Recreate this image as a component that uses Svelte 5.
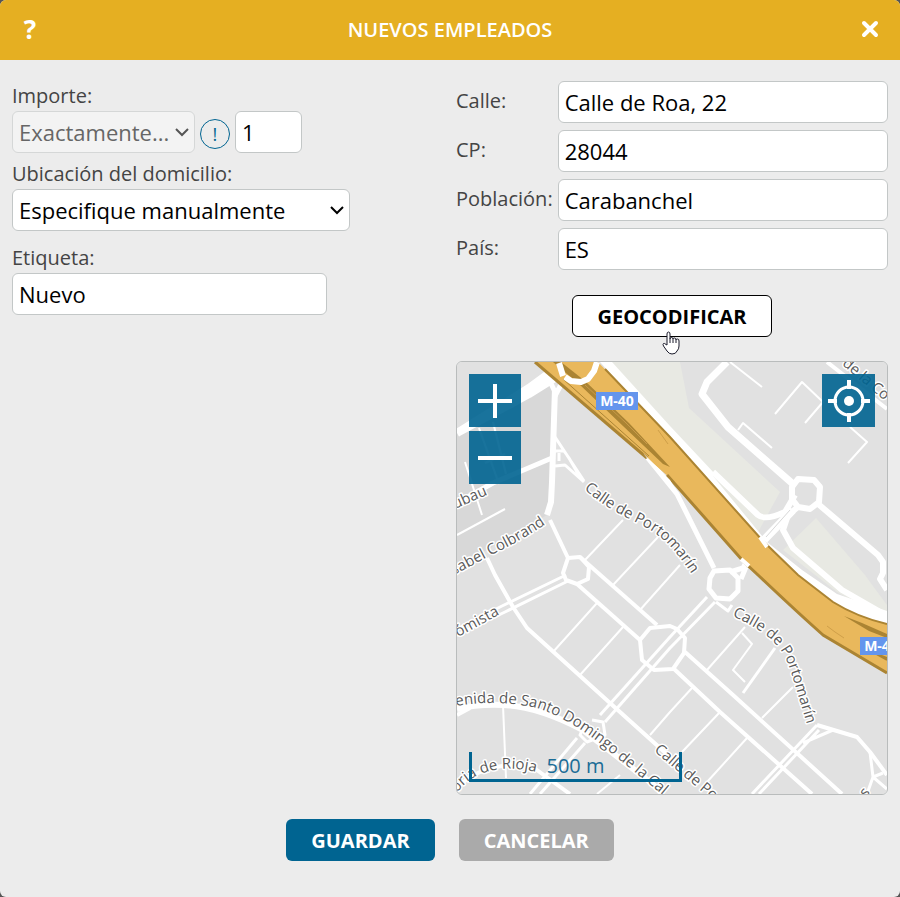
<script>
  let amountMode = 'exact'
  let amount = 1
  let location = 'manual'
  let label = 'Nuevo'

  let address = [
    { id: 'street', name: 'Calle', value: 'Calle de Roa, 22' },
    { id: 'zip', name: 'CP', value: '28044' },
    { id: 'city', name: 'Población', value: 'Carabanchel' },
    { id: 'country', name: 'País', value: 'ES' },
  ]

  // Streets grouped by stroke width, widest last
  const streets = [
    {
      width: 2,
      paths: [
        'M0 173L48 147M8 100L25 153M22 66L42 122M36 60L49 112M28 101L48 92',
        'M166 158L128 198M201 175L156 223M223 203L183 248',
        'M140 241L96 290M166 265L123 313M46 343L49 416',
        'M213 350L193 373M163 413L140 432M235 326L213 350',
        'M288 265L250 308M285 271L295 282L276 308L288 320',
        'M336 325L305 356M263 350L225 390M290 376L250 420',
        'M273 0L305 25M318 52L345 20L366 40L348 61',
        'M393 65L410 80L391 101M281 68L286 61L315 86',
      ],
    },
    {
      width: 3,
      paths: [
        'M109 213L45 244L0 267M111 219L48 250L0 273',
        'M213 275L143 353M213 286L148 360M250 235L213 275M258 240L213 286',
        'M120 376L73 432M128 381L83 432',
        'M360 363L295 432M362 368L302 432M376 368L346 381',
        'M98 89L107 89L112 96L124 117M98 104L108 103L127 120M98 75L127 119M102 91V99',
        'M135 358L146 360L148 373L130 380L123 373L126 366',
        'M413 390L416 415L410 432M416 415L426 411M416 415L430 427',
        'M259 240L271 249L275 243',
        'M318 286L286 331',
      ],
    },
    {
      width: 4,
      paths: [
        'M93 158L111 196M30 196L38 213L56 245L70 266L153 341L213 395',
        'M111 196L123 195L132 205L131 217L120 222L109 218L106 211Z',
        'M123 195L200 263M120 222L183 278',
        'M193 266L183 278L185 298L197 308L216 307L227 291L228 276L220 267L213 264Z',
        'M228 290L276 333L385 432M216 306L263 350L355 432',
        'M360 363L400 375L413 390L430 413',
        'M0 426Q25 400 73 403L113 432M370 0L430 47',
        'M0 353L13 346',
      ],
    },
    {
      width: 5,
      paths: [
        'M95 96L36 121L0 141M90 13L98 30M108 15L98 34',
        'M190 95L220 132L257 206',
        'M257 209L273 208L281 216L281 229L273 237L259 236L252 227L253 216Z',
        'M273 210L286 206L291 197M284 217L289 205',
      ],
    },
    {
      width: 6,
      paths: [
        'M98 26L95 120L94 140L90 153',
        'M256 110L301 153Q308 159 328 150L338 133',
        'M341 145L331 153L326 168L336 186L385 228L430 254',
        'M341 117L357 118L363 125L362 140L353 147L341 145L335 137L335 125Z',
        'M360 141L421 193L426 200L426 211L423 217L430 228',
        'M0 347Q20 342 46 343Q80 344 126 368L193 420L206 432',
      ],
    },
    {
      width: 7,
      paths: ['M270 0L250 20L245 32L271 65L336 122'],
    },
    {
      width: 8,
      paths: ['M0 71L72 32L104 12M0 71L72 26L102 4M336 148L305 180'],
    },
  ]

  const streetNames = [
    { d: 'M127 127C150 147 165 153 190 166C210 178 222 192 244 226', text: 'Calle de Portomarín' },
    { d: 'M275 254C300 265 320 278 329 297C337 316 342 338 353 372', text: 'Calle de Portomarín' },
    { d: 'M-3 213L40 190Q70 176 100 154', text: 'sabel Colbrand' },
    { d: 'M1 275L60 243', text: 'ómista' },
    { d: 'M-2 147L50 124', text: 'ubau' },
    { d: 'M-1 344Q40 337 80 346Q108 355 141 380L225 449', text: 'enida de Santo Domingo de la Cal' },
    { d: 'M0 431Q15 410 45 407Q65 405 92 414', text: 'oria de Rioja' },
    { d: 'M197 389Q225 413 300 476', text: 'Calle de Portomarín' },
    { d: 'M377 -4L455 62', text: 'r de la Co' },
    { d: 'M409 436L430 410', text: 's' },
  ]
</script>

<div class="dialog">
  <header>
    <button class="icon-button" aria-label="Ayuda">?</button>
    <h1>NUEVOS EMPLEADOS</h1>
    <button class="icon-button" aria-label="Cerrar">
      <svg width="18" height="18" viewBox="0 0 18 18">
        <path d="M3 3L15 15M15 3L3 15" stroke="#fff" stroke-width="4" stroke-linecap="round" />
      </svg>
    </button>
  </header>

  <main>
    <section class="column">
      <div class="group">
        <label for="amount-mode">Importe:</label>
        <div class="row">
          <div class="select short">
            <select id="amount-mode" bind:value={amountMode} disabled>
              <option value="exact">Exactamente...</option>
            </select>
            <svg width="14" height="10" viewBox="0 0 14 10">
              <path d="M1 2L7 8L13 2" />
            </svg>
          </div>
          <button class="info" aria-label="Información">!</button>
          <input class="amount" type="text" aria-label="Cantidad" bind:value={amount} />
        </div>
      </div>

      <div class="group">
        <label for="location">Ubicación del domicilio:</label>
        <div class="select wide">
          <select id="location" bind:value={location}>
            <option value="manual">Especifique manualmente</option>
          </select>
          <svg width="14" height="10" viewBox="0 0 14 10">
            <path d="M1 2L7 8L13 2" />
          </svg>
        </div>
      </div>

      <div class="group spaced">
        <label for="label">Etiqueta:</label>
        <input id="label" class="tag" type="text" bind:value={label} />
      </div>
    </section>

    <section class="column">
      <div class="address">
        {#each address as field}
          <label for={field.id}>{field.name}:</label>
          <input id={field.id} type="text" bind:value={field.value} />
        {/each}
      </div>

      <div class="geocode">
        <button class="button outline">GEOCODIFICAR</button>
        <svg class="pointer" width="18" height="24" viewBox="0 0 18 24">
          <path
            d="M5 14V3Q5 1 6.500 1T8 3V8Q8 6.500 9.500 6.500T11 8Q11 7 12.500 7T14 9Q14 8 15.500 8T17 10V15Q17 18 15 20Q14 23 10 23Q7 23 5 20L1.500 15Q.5 13 1.500 12.500Q2.500 12 4 13.500Z"
            fill="#fff"
            stroke="#1b1b2b"
          />
          <path d="M8 8V12M11 8V12M14 9V12" stroke="#1b1b2b" />
        </svg>
      </div>

      <div class="map">
        <svg class="tiles" viewBox="0 0 430 432" preserveAspectRatio="xMidYMid slice">
          <rect width="430" height="432" fill="#e1e1e1" />
          <path d="M0 71L97 20L93 140L90 153L0 205Z" fill="#d8d8d8" />
          <path d="M150 0H223L232 46L323 130L300 172L213 76Z" fill="#e8e9e3" />
          <path d="M359 156L408 213L413 220L430 243V258L380 230L326 188Z" fill="#e8e9e3" />

          {#each streets as group}
            {#each group.paths as d}
              <path class="street" {d} stroke-width={group.width} />
            {/each}
          {/each}
          <path d="M333 148L309 175" stroke="#d8d8d8" />

          <!-- slip road running beside the motorway -->
          <path
            d="M143 0H155L213 64L258 112L256 114L310 180L345 208L380 232L430 249V266L376 243L340 216L303 181L213 77Z"
            fill="#fff"
          />
          <path
            d="M78 0H141L213 75L305 178L341 213L376 240Q400 255 430 262V311L366 273Q340 250 301 213L286 198L213 116L190 96Z"
            fill="#e9b85c"
          />
          <g fill="none" stroke="#ab8433" stroke-width="2">
            <path d="M148 7L213 75L305 178L341 213L376 240Q400 255 430 262" />
            <path d="M78 0L190 96" stroke-width="3" />
            <path d="M106 17L192 94" stroke-width="1" />
            <path d="M210 113L286 199L301 213Q340 250 366 273L430 311" stroke-width="3" />
            <path d="M430 296L407 287M430 298L412 288" />
          </g>
          <path d="M96 0H104L128 19L172 61L213 105L206 102L166 64L122 22Z" fill="#ab8433" />
          <path d="M128 23L168 60L190 82" stroke="#c89a48" fill="none" />
          <path d="M186 91L213 118L222 133L212 124Z" fill="#fff" />
          <path d="M387 254L405 261L430 272V276L412 269Z" fill="#ab8433" />
          <path d="M370 264L378 270L387 276M201 68L211 82" stroke="#cf9f49" fill="none" />
          <path class="street" d="M102 1L106 14M108 15L114 19L124 20L131 17L137 9L140 0" stroke-width="6" />
          <path class="street" d="M303 175L310 185M284 197L292 204" stroke-width="4" />

          {#each streetNames as name, i}
            <path id="street-{i}" d={name.d} fill="none" />
            <text class="street-name">
              <textPath href="#street-{i}">{name.text}</textPath>
            </text>
          {/each}

          <rect x="139" y="30" width="42" height="18" fill="#6495ed" />
          <text class="road" x="160" y="44">M-40</text>
          <rect x="403" y="275" width="42" height="18" fill="#6495ed" />
          <text class="road" x="424" y="289">M-40</text>
        </svg>

        <div class="zoom">
          <button aria-label="Acercar">
            <svg width="36" height="36" viewBox="0 0 36 36">
              <path d="M1 18H35M18 1V35" stroke="#fff" stroke-width="4" />
            </svg>
          </button>
          <button aria-label="Alejar">
            <svg width="36" height="36" viewBox="0 0 36 36">
              <path d="M1 18H35" stroke="#fff" stroke-width="4" />
            </svg>
          </button>
        </div>
        <button class="locate" aria-label="Mi ubicación">
          <svg width="42" height="42" viewBox="0 0 42 42" fill="none" stroke="#fff">
            <circle cx="21" cy="21" r="14" stroke-width="3" />
            <circle cx="21" cy="21" r="5" fill="#fff" stroke="none" />
            <path d="M21 0V9M21 33V42M0 21H9M33 21H42" stroke-width="4" />
          </svg>
        </button>
        <div class="scale">500 m</div>
      </div>
    </section>
  </main>

  <footer>
    <button class="button primary">GUARDAR</button>
    <button class="button muted">CANCELAR</button>
  </footer>
</div>

<style>
  :global(body) {
    background: #555;
  }
  .dialog {
    display: flex;
    flex-direction: column;
    min-height: 100vh;
    overflow: hidden;
    border-radius: 6px;
    background: #ececec;
    color: #444;
    font-family: 'Open Sans', sans-serif;
    font-size: 20px;
  }
  .dialog * {
    box-sizing: border-box;
  }
  header {
    display: flex;
    align-items: center;
    justify-content: space-between;
    height: 60px;
    padding: 0 12px 2px;
    background: #e5af22;
    color: #fff;
  }
  h1 {
    margin: 0;
    font-size: 20px;
    font-weight: 600;
  }
  button {
    font-family: inherit;
    cursor: pointer;
  }
  .icon-button {
    display: flex;
    align-items: center;
    justify-content: center;
    width: 36px;
    height: 36px;
    padding: 0;
    border: 0;
    background: none;
    color: #fff;
    font-size: 26px;
    font-weight: 700;
  }
  main {
    display: grid;
    grid-template-columns: 1fr 1fr;
    gap: 12px;
    padding: 21px 12px 24px;
  }
  .column {
    min-width: 0;
  }
  .group {
    margin-bottom: 6px;
  }
  .group.spaced {
    margin-top: 12px;
  }
  .group label {
    display: block;
    line-height: 30px;
  }
  .row {
    display: flex;
    align-items: center;
    gap: 5px;
  }
  input,
  select {
    display: block;
    width: 100%;
    height: 42px;
    margin: 0;
    padding: 0 6px;
    border: 1px solid #c3c7c7;
    border-radius: 6px;
    background: #fff;
    color: #000;
    font-family: inherit;
    font-size: 22px;
  }
  select {
    appearance: none;
  }
  select:disabled {
    border-color: #d5d7d7;
    background: #f3f3f3;
    color: #666;
    opacity: 1;
  }
  .select {
    position: relative;
  }
  .select svg {
    position: absolute;
    top: 16px;
    right: 6px;
    fill: none;
    stroke: #000;
    stroke-width: 2;
    pointer-events: none;
  }
  .short svg {
    stroke: #555;
  }
  .short {
    width: 183px;
  }
  .wide {
    width: 338px;
    max-width: 100%;
  }
  .tag {
    width: 315px;
    max-width: 100%;
  }
  .amount {
    width: 67px;
  }
  .info {
    width: 30px;
    height: 30px;
    margin-top: 4px;
    padding: 0;
    border: 1px solid #006491;
    border-radius: 50%;
    background: none;
    color: #006491;
    font-size: 18px;
    line-height: 28px;
  }
  .address {
    display: grid;
    grid-template-columns: auto 1fr;
    gap: 7px 5px;
    padding-bottom: 1px;
  }
  .address label {
    line-height: 40px;
  }
  .geocode {
    position: relative;
    width: fit-content;
    margin: 24px auto;
  }
  .pointer {
    position: absolute;
    top: 36px;
    left: 90px;
    fill: none;
  }
  .button {
    display: block;
    height: 42px;
    padding: 0 24px;
    border: 1px solid transparent;
    border-radius: 6px;
    color: #fff;
    font-size: 20px;
    font-weight: 700;
  }
  .outline {
    border-color: #000;
    background: #fff;
    color: #000;
  }
  .primary {
    background: #006491;
  }
  .muted {
    background: #aaa;
  }
  .map {
    position: relative;
    overflow: hidden;
    border: 1px solid #b9bcbc;
    border-radius: 6px;
  }
  .tiles {
    display: block;
    width: 100%;
  }
  .street {
    fill: none;
    stroke: #fff;
    stroke-linejoin: round;
  }
  .street-name {
    fill: #5a5a5a;
    stroke: #fff;
    stroke-width: 3px;
    stroke-linejoin: round;
    paint-order: stroke;
    font-size: 15px;
  }
  .road {
    fill: #fff;
    font-size: 14px;
    font-weight: 700;
    text-anchor: middle;
  }
  .zoom {
    position: absolute;
    top: 12px;
    left: 12px;
    display: flex;
    flex-direction: column;
    gap: 4px;
  }
  .map button {
    display: flex;
    align-items: center;
    justify-content: center;
    width: 52px;
    height: 53px;
    padding: 0;
    border: 0;
    background: rgba(0, 100, 145, 0.9);
  }
  .map .locate {
    position: absolute;
    top: 12px;
    right: 12px;
    width: 53px;
  }
  .scale {
    position: absolute;
    bottom: 12px;
    left: 12px;
    width: 213px;
    height: 30px;
    border: 3px solid #006491;
    border-top: 0;
    color: #1a6c96;
    line-height: 27px;
    text-align: center;
  }
  footer {
    display: flex;
    justify-content: center;
    gap: 24px;
    padding-bottom: 36px;
  }
</style>
